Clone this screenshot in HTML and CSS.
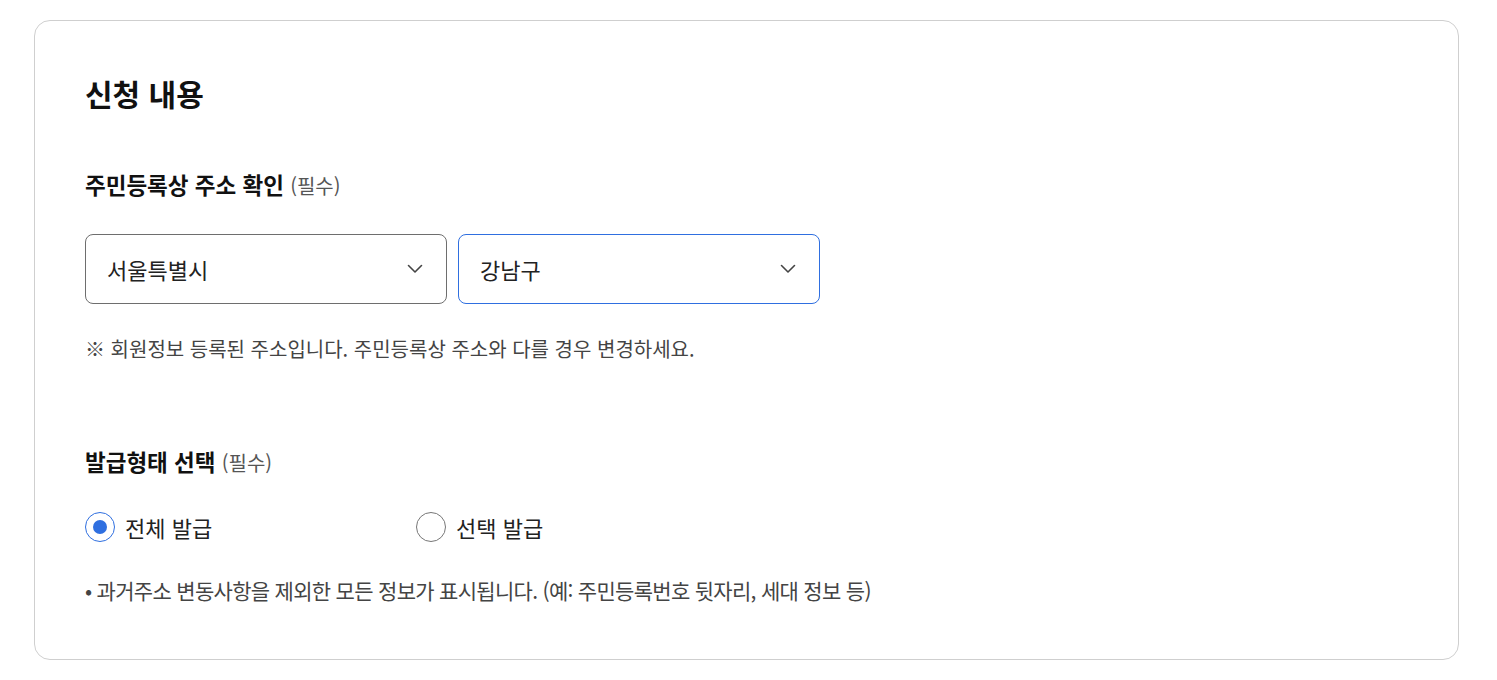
FILE: index.html
```html
<!DOCTYPE html>
<html lang="ko">
<head>
<meta charset="utf-8">
<link rel="stylesheet" href="styles.css">
</head>
<body>
<section class="card">
  <h2 class="card-title">신청 내용</h2>

  <div class="field">
    <div class="label">주민등록상 주소 확인 <span class="req">(필수)</span></div>
    <div class="selects">
      <div class="select">
        <span>서울특별시</span>
        <svg class="chev" width="16" height="16" viewBox="0 0 16 16"><path d="M1.5 4.5 L8 11 L14.5 4.5" fill="none" stroke="#444" stroke-width="1.6" stroke-linecap="round" stroke-linejoin="round"/></svg>
      </div>
      <div class="select active">
        <span>강남구</span>
        <svg class="chev" width="16" height="16" viewBox="0 0 16 16"><path d="M1.5 4.5 L8 11 L14.5 4.5" fill="none" stroke="#444" stroke-width="1.6" stroke-linecap="round" stroke-linejoin="round"/></svg>
      </div>
    </div>
    <p class="note">※ 회원정보 등록된 주소입니다. 주민등록상 주소와 다를 경우 변경하세요.</p>
  </div>

  <div class="field second">
    <div class="label">발급형태 선택 <span class="req">(필수)</span></div>
    <div class="radios">
      <label class="radio checked"><span class="dot"></span>전체 발급</label>
      <label class="radio"><span class="dot"></span>선택 발급</label>
    </div>
    <p class="bullet">• 과거주소 변동사항을 제외한 모든 정보가 표시됩니다. (예: 주민등록번호 뒷자리, 세대 정보 등)</p>
  </div>
</section>
</body>
</html>
```

FILE: styles.css
```css
* { box-sizing: border-box; }
body {
  margin: 0;
  background: #fff;
  font-family: "Noto Sans CJK KR", "Noto Sans", sans-serif;
  color: #222;
}
.card {
  margin: 20px 0 0 34px;
  width: 1425px;
  height: 640px;
  border: 1px solid #cfcfcf;
  border-radius: 16px;
  padding: 52px 50px 0 50px;
}
.card-title {
  margin: 0;
  font-size: 30px;
  font-weight: 700;
  line-height: 40px;
  color: #111;
}
.field { margin-top: 56px; }
.field.second { margin-top: 82px; }
.label {
  font-size: 22.5px;
  font-weight: 700;
  color: #111;
  line-height: 30px;
}
.req {
  font-size: 20px;
  font-weight: 400;
  color: #555;
}
.selects {
  display: flex;
  gap: 11px;
  margin-top: 33px;
}
.select {
  width: 362px;
  height: 70px;
  border: 1px solid #6e6e6e;
  border-radius: 8px;
  display: flex;
  align-items: center;
  justify-content: space-between;
  padding: 0 23px 0 21px;
  font-size: 22px;
  color: #222;
}
.select.active { border-color: #2f6fe0; }
.note {
  margin: 30px 0 0;
  font-size: 20px;
  color: #444;
  line-height: 30px;
}
.radios {
  display: flex;
  margin-top: 34px;
}
.radio {
  display: flex;
  align-items: center;
  gap: 10px;
  width: 331px;
  font-size: 22px;
  color: #222;
  line-height: 30px;
}
.dot {
  width: 30px;
  height: 30px;
  border-radius: 50%;
  border: 1px solid #777;
  display: flex;
  align-items: center;
  justify-content: center;
  background: #fff;
  flex: none;
}
.radio.checked .dot { border-color: #2f6fe0; }
.radio.checked .dot::after {
  content: "";
  width: 14px;
  height: 14px;
  border-radius: 50%;
  background: #2f6fe0;
}
.bullet {
  margin: 33px 0 0;
  font-size: 21px;
  color: #444;
  line-height: 30px;
  letter-spacing: -0.7px;
}
```
